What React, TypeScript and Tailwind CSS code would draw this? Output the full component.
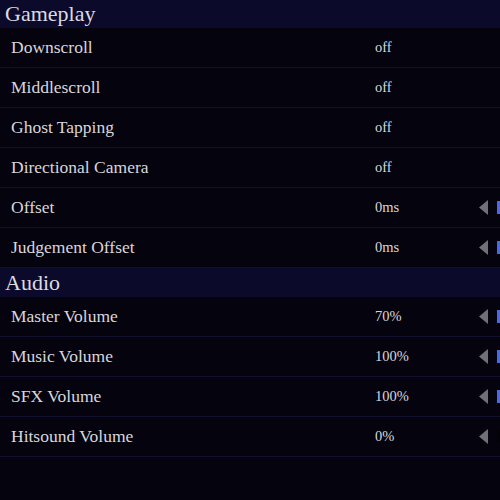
import React from 'react';

type Row = { label: string; value: string; slider?: number };

const sections: { title: string; rows: Row[] }[] = [
  {
    title: 'Gameplay',
    rows: [
      { label: 'Downscroll', value: 'off' },
      { label: 'Middlescroll', value: 'off' },
      { label: 'Ghost Tapping', value: 'off' },
      { label: 'Directional Camera', value: 'off' },
      { label: 'Offset', value: '0ms', slider: 1 },
      { label: 'Judgement Offset', value: '0ms', slider: 1 },
    ],
  },
  {
    title: 'Audio',
    rows: [
      { label: 'Master Volume', value: '70%', slider: 1 },
      { label: 'Music Volume', value: '100%', slider: 1 },
      { label: 'SFX Volume', value: '100%', slider: 1 },
      { label: 'Hitsound Volume', value: '0%', slider: 0 },
    ],
  },
];

function OptionRow({ row }: { row: Row }) {
  return (
    <div className="relative flex h-[40px] items-center border-b border-[#100f2c] text-[#d9d6dc]">
      <span className="pl-[11px] text-[17.5px] leading-none">{row.label}</span>
      <span className="absolute left-[375px] text-[14.5px] leading-none">{row.value}</span>
      {row.slider !== undefined && (
        <div className="absolute left-[479px] flex items-center gap-[9px]">
          <svg width="9" height="15" viewBox="0 0 9 15">
            <path d="M9 0 L0 7.5 L9 15 Z" fill="#707076" />
          </svg>
          <div className={`h-[13px] w-[6px] ${row.slider ? 'bg-[#4a6ae0]' : 'bg-[#030208]'}`} />
        </div>
      )}
    </div>
  );
}

export default function App() {
  return (
    <div
      className="h-[500px] w-[500px] overflow-hidden bg-[#05040e]"
      style={{ fontFamily: '"Liberation Serif", "DejaVu Serif", serif' }}
    >
      {sections.map((s, i) => (
        <div key={s.title}>
          <div
            className={`flex items-center bg-[#0b0a2a] pl-[5px] text-[22px] leading-none text-[#dcdae4] ${
              i === 0 ? 'h-[28px]' : 'h-[29px]'
            }`}
          >
            {s.title}
          </div>
          {s.rows.map((r) => (
            <OptionRow key={r.label} row={r} />
          ))}
        </div>
      ))}
    </div>
  );
}
